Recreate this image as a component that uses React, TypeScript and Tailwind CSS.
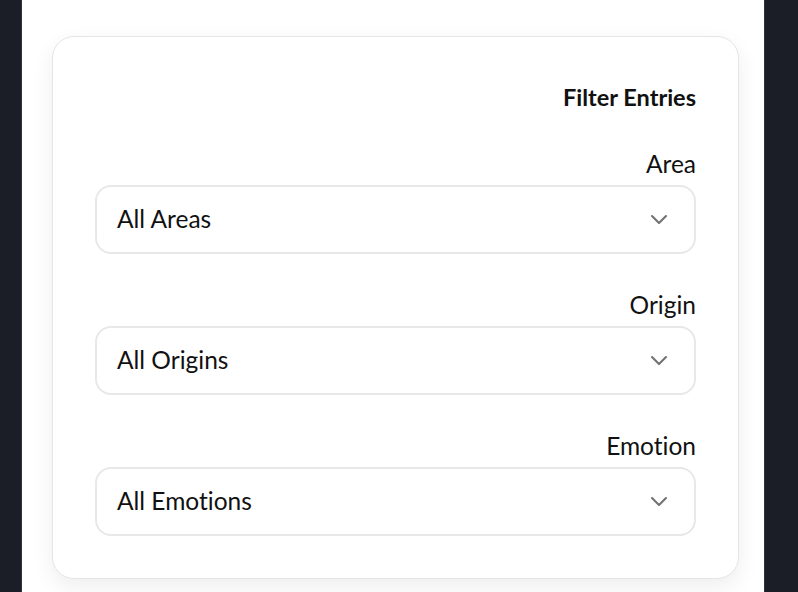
import React from 'react';

const filters = [
    { label: 'Area', value: 'All Areas' },
    { label: 'Origin', value: 'All Origins' },
    { label: 'Emotion', value: 'All Emotions' },
];

function Chevron() {
    return (
        <svg width="18" height="11" viewBox="0 0 18 11" fill="none" className="text-[#727272]">
            <path d="M2 2l7 7 7-7" stroke="currentColor" strokeWidth="2.1" strokeLinecap="round" strokeLinejoin="round" />
        </svg>
    );
}

export default function App() {
    return (
        <div className="min-h-[592px] w-[798px] bg-[#1b1e27] font-['Lato',sans-serif] text-[#111] [font-variant-ligatures:none]">
            <div className="mx-[21px] w-[744px] min-h-[592px] border-x border-[#2e323c] bg-white pl-[30px] pr-[25px] pt-[36px]">
                <div className="rounded-[22px] border border-[#e5e5e5] bg-white px-[42px] pt-[44px] pb-[42px] shadow-[0_8px_22px_rgba(0,0,0,0.07)]">
                    <h2 className="text-right text-[23.5px] font-bold leading-[32px] text-[#111]">Filter Entries</h2>
                    <div className="mt-[35px] flex flex-col gap-[35px]">
                        {filters.map((f) => (
                            <div key={f.label} className="flex flex-col">
                                <label className="text-right text-[24.5px] leading-[32px] text-[#111]">{f.label}</label>
                                <div className="mt-[5px] flex h-[69px] items-center justify-between rounded-[16px] border-2 border-[#e8e8e8] bg-white pl-[20px] pr-[26px]">
                                    <span className="text-[24.5px] text-[#111]">{f.value}</span>
                                    <Chevron />
                                </div>
                            </div>
                        ))}
                    </div>
                </div>
            </div>
        </div>
    );
}
